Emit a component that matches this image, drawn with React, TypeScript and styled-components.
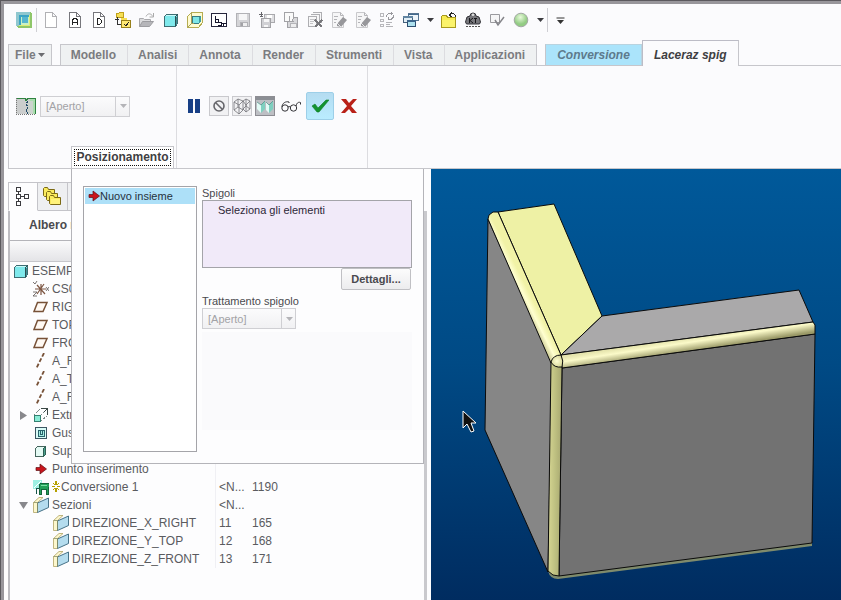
import React from "react";
import styled, { createGlobalStyle, css } from "styled-components";

const GlobalStyle = createGlobalStyle`
  * { box-sizing: border-box; }
  body { margin: 0; background: #fbfbfd; }
  body, button, select, textarea { font-family: "Liberation Sans", Arial, sans-serif; }
  button { margin: 0; padding: 0; border: 0; background: none; color: inherit; }
`;

const Frame = styled.div`
  min-height: 100vh;
  display: flex;
  border: solid #5b595e;
  border-width: 1px 0 0 1px;
  padding: 3px 0 0 3px;
  background: #98969b;
`;
const Page = styled.div`
  flex: 1;
  min-width: 0;
  display: flex;
  flex-direction: column;
  background: #fbfbfd;
  color: #4a4a4e;
`;

/* ---------- quick access bar ---------- */
const QuickBar = styled.div`
  display: flex;
  align-items: center;
  height: 32px;
  padding-left: 8px;
`;
const QuickButton = styled.button<{ $narrow?: boolean }>`
  width: ${(p) => (p.$narrow ? 14 : 24)}px;
  height: 24px;
  flex: none;
  display: grid;
  place-items: center;
`;
const QuickDivider = styled.span<{ $gap?: number }>`
  width: 1px;
  height: 24px;
  margin-right: ${(p) => p.$gap ?? 0}px;
  background: #cfcfd4;
`;

/* ---------- tabs ---------- */
const TabBar = styled.nav`
  display: flex;
  align-items: flex-end;
  gap: 8px;
  height: 29px;
  padding-left: 4px;
`;
const TabGroup = styled.div`
  display: flex;
  align-items: flex-end;
`;
const Tab = styled.button<{ $kind?: "file" | "context" | "active" }>`
  height: 21px;
  padding: 0 11px 0 10px;
  font-size: 12px;
  font-weight: bold;
  white-space: nowrap;
  color: #7b7c80;
  background: #eff1f2;
  border-top: 1px solid #c6c6cb;
  border-right: 1px solid #dcdce0;
  &:first-child { border-left: 1px solid #c6c6cb; }
  &:last-child { border-right-color: #c6c6cb; }
  ${(p) => p.$kind === "file" && css`
    display: flex;
    align-items: center;
    gap: 2px;
    padding: 0 6px;
  `}
  ${(p) => p.$kind === "context" && css`
    padding: 0 11px;
    background: #abe4fb;
    font-style: italic;
    color: #5d7a8c;
    border-color: #b9d3df;
  `}
  ${(p) => p.$kind === "active" && css`
    height: 26px;
    margin-bottom: -1px;
    padding: 3px 11px 0;
    background: #fbfbfd;
    font-style: italic;
    color: #3e3e42;
    border: 1px solid #bcbcc6;
    border-bottom: 0;
    position: relative;
  `}
`;

/* ---------- ribbon ---------- */
const Ribbon = styled.section`
  display: flex;
  margin-left: 4px;
  border: 1px solid #c6c6cb;
  border-right: 0;
`;
const Group = styled.div`
  display: flex;
  flex-direction: column;
  padding: 26px 8px 0 7px;
  border-right: 1px solid #dcdce0;
`;
const GroupRow = styled.div<{ $gap?: number }>`
  display: flex;
  align-items: center;
  height: 28px;
  gap: ${(p) => p.$gap ?? 3}px;
`;
const ToolButton = styled.button<{ $look?: "framed" | "pressed" | "accept" }>`
  width: 20px;
  height: 20px;
  display: grid;
  place-items: center;
  flex: none;
  ${(p) => p.$look === "framed" && css`
    border: 1px solid #c9c9cd;
    background: #f1f1f3;
  `}
  ${(p) => p.$look === "pressed" && css`
    border: 1px solid #8d8d93;
    background: #bdbfc4;
  `}
  ${(p) => p.$look === "accept" && css`
    width: 28px;
    height: 28px;
    border: 1px solid #9dcfe8;
    border-radius: 2px;
    background: linear-gradient(#b5dcf1, #b9ecff);
  `}
`;
const Pause = styled(ToolButton)`
  margin-right: 2px;
`;
const Glasses = styled(ToolButton)`
  width: 25px;
`;
const Cancel = styled(ToolButton)`
  margin-left: 2px;
`;
const PanelTab = styled.button`
  align-self: flex-end;
  width: 103px;
  height: 22px;
  margin: 26px -6px 0 55px;
  padding: 2px;
  border: 1px solid #c6c6cb;
  border-bottom: 0;
  background: #fff;
  font-size: 12px;
  font-weight: bold;
  color: #3f3f43;
`;
const FocusRing = styled.span`
  display: block;
  line-height: 15px;
  border: 1px dotted #111;
`;

/* ---------- drop-down ---------- */
const Combo = styled.div<{ $width: number }>`
  display: grid;
  width: ${(p) => p.$width}px;
  height: 21px;
  flex: none;
  & > * { grid-area: 1 / 1; }
`;
const ComboSelect = styled.select`
  appearance: none;
  width: 100%;
  height: 21px;
  padding: 0 5px;
  border: 1px solid #cfcfd3;
  border-radius: 0;
  background: linear-gradient(#fbfbfc, #f1f1f3);
  font-size: 11px;
  color: #a2a2a6;
  &:disabled { opacity: 1; color: #a2a2a6; }
`;
const ComboArrow = styled.span`
  justify-self: end;
  width: 15px;
  display: grid;
  place-items: center;
  border-left: 1px solid #cfcfd3;
  pointer-events: none;
`;

/* ---------- workspace ---------- */
const Workspace = styled.main`
  flex: 1;
  display: grid;
  grid-template-columns: 427px minmax(0, 1fr);
  position: relative;
`;
const Sidebar = styled.aside`
  display: flex;
  flex-direction: column;
  padding: 13px 4px 0 4px;
  background: #fdfdfe;
`;
const SideTabs = styled.div`
  display: flex;
  height: 29px;
`;
const SideTab = styled.button<{ $active?: boolean }>`
  width: 30px;
  display: grid;
  place-items: center;
  border: 1px solid #c4c4c9;
  border-left-width: ${(p) => (p.$active ? 1 : 0)}px;
  border-bottom-color: ${(p) => (p.$active ? "#fdfdfe" : "#c4c4c9")};
  background: ${(p) => (p.$active ? "#fdfdfe" : "#eeeff1")};
`;
const TreePanel = styled.div`
  flex: 1;
  border-left: 2px solid #bdbdc2;
  border-right: 3px solid #c9c9cd;
`;
const TreeTitle = styled.h2`
  margin: 0;
  padding-left: 19px;
  font-size: 12px;
  line-height: 29px;
`;
const TreeTable = styled.table`
  width: 100%;
  table-layout: fixed;
  border-collapse: separate;
  border-spacing: 0;
  font-size: 12px;
  color: #5a5b5f;
`;
const TreeHead = styled.th<{ $width?: number }>`
  width: ${(p) => (p.$width ? `${p.$width}px` : "auto")};
  height: 22px;
  padding: 0;
  border-top: 1px solid #b4b4b9;
  border-bottom: 1px solid #c6c6cb;
  background: linear-gradient(#fafafb, #e4e4e7);
`;
const TreeCell = styled.td<{ $divider?: boolean }>`
  height: 18px;
  padding: 0 0 0 ${(p) => (p.$divider ? 0 : 3)}px;
  white-space: nowrap;
  border-right: ${(p) => (p.$divider ? "1px solid #f0f0f4" : "0")};
`;
const TreeNode = styled.div<{ $depth: number; $toggle?: boolean }>`
  display: flex;
  align-items: center;
  height: 18px;
  gap: 3px;
  padding-left: ${(p) => (p.$toggle ? 6 : 3 + p.$depth * 20)}px;
`;
const Toggle = styled.button`
  width: 14px;
  height: 16px;
  display: grid;
  place-items: center;
`;

/* ---------- placement panel, floating above the tree ---------- */
const Placement = styled.form`
  position: absolute;
  top: 0;
  left: 67px;
  width: 353px;
  display: grid;
  grid-template-columns: 114px 1fr;
  gap: 5px;
  padding: 17px 11px 11px;
  border: solid #b4b4b9;
  border-width: 0 1px 1px;
  background: #fdfdfe;
  font-size: 11px;
`;
const SetList = styled.ul`
  margin: 0;
  padding: 1px;
  height: 266px;
  list-style: none;
  border: 1px solid #a4a4a9;
  background: #fff;
`;
const SetItem = styled.li`
  display: flex;
  align-items: center;
  height: 16px;
  padding-left: 3px;
  background: #ade0f8;
  color: #26313c;
`;
const Fields = styled.div`
  display: flex;
  flex-direction: column;
`;
const FieldLabel = styled.label`
  line-height: 14px;
`;
const Collector = styled.textarea`
  height: 68px;
  margin: 0;
  padding: 3px 15px;
  border: 1px solid #a4a4a9;
  border-radius: 0;
  outline: 0;
  resize: none;
  background: #f1eaf9;
  font-size: 11px;
  color: #2d2838;
`;
const DetailsButton = styled.button`
  align-self: flex-end;
  height: 22px;
  width: 70px;
  margin: 0 1px 4px 0;
  border: 1px solid #c0c0c4;
  border-radius: 2px;
  background: linear-gradient(#fcfcfc, #ececee);
  font-size: 11px;
  font-weight: bold;
`;
const Blank = styled.div`
  flex: 1;
  margin: 3px 0 22px;
  background: #fafafc;
`;

const Viewport = styled.div`
  background: linear-gradient(#00599a, #004a85 45%, #002c60);
  overflow: hidden;
`;
const Scene = styled.svg`
  display: block;
  width: 100%;
  height: 431px;
`;

/* ---------- icons ---------- */
type IconProps = { children: React.ReactNode; w?: number; h?: number; smooth?: boolean };
const Icon = ({ children, w = 16, h = 16, smooth }: IconProps) => (
  <svg width={w} height={h} viewBox={`0 0 ${w} ${h}`} fill="none" aria-hidden="true"
    shapeRendering={smooth ? "auto" : "crispEdges"}>{children}</svg>
);
const Down = ({ color = "#3c3c40" }: { color?: string }) => (
  <Icon w={7} h={4} smooth><path d="M0 0h7L3.5 4z" fill={color} /></Icon>
);
const Sheet = ({ mark, tone = "#77777c" }: { mark?: React.ReactNode; tone?: string }) => (
  <Icon><path d="M2.500.5h7l4 4v11h-11zM9.500.5v4h4" stroke={tone} fill="#fff" />{mark}</Icon>
);
const EditSheet = () => (
  <Icon smooth>
    <path d="M1.500.5h8l3 3v12h-11z" fill="#f6f6f7" stroke="#c9c9cc" />
    <path d="M9.500.5v3h3M3 4.500h4M3 7.500h3M3 10.500h2" stroke="#b4b4b8" />
    <path d="M6 12l6-7 4 3-6 7-4-1z" fill="#97979b" />
    <path d="M6 11l4 4" stroke="#e8e8ea" />
  </Icon>
);

const LogoIcon = () => (
  <Icon>
    <path d="M0 0h14l2 2v14H2l-2-2z" fill="#8fc66a" />
    <path d="M0 0h14v3H3v11H0z" fill="#8fc7cf" />
    <path d="M3 3h10v10H3z" fill="#3aa3c4" />
    <path d="M5 5h9v8H5z" fill="#c9f0c4" />
    <path d="M6 5h6v6H6z" fill="#55b5cf" />
    <path d="M3 13.500h10.500V3" stroke="#dcec74" />
  </Icon>
);
const StructureIcon = () => (
  <Icon>
    <path d="M1 1h3l1-1h3v5H1z" fill="#f6df54" stroke="#c0a01c" />
    <path d="M0 7h4M2 5v7h5M6 7h3" stroke="#333" />
    <path d="M6 6h6v3H6z" fill="#f6df54" />
    <rect x="6.500" y="8.500" width="9" height="7" fill="#ffe873" stroke="#97801c" />
    <path d="M9 12l2 2 3-4" stroke="#222" />
  </Icon>
);
const OpenIcon = () => (
  <Icon smooth>
    <path d="M.5 14.500V6.500h4l1 1h6v2" fill="#dcdcde" stroke="#a9a9ad" />
    <path d="M.5 14.500l3-5h11l-4 5z" fill="#b6b6ba" stroke="#9d9da1" />
    <path d="M7 4.500c2-4 5-3 7 0M14.500 1v4h-4" stroke="#aaa" />
  </Icon>
);
const Cube = () => (
  <Icon w={14} h={14}>
    <path d="M.5 3.500l2-2h11v9l-2 3H.5z" fill="#7fe9ec" stroke="#3d6d72" />
    <path d="M11.500 13V3.500l2-2" stroke="#2a5054" />
    <path d="M12 4l1-1v8l-1 1z" fill="#3e8d92" />
    <path d="M1 3h10l1-1H3z" fill="#c7fafa" />
  </Icon>
);
const NestedCubeIcon = () => (
  <Icon>
    <path d="M.5 4.500l4-4h11v10l-4 5H.5z" fill="#fffbd0" stroke="#b5ac52" />
    <path d="M5.500 4.500h8v5l-2 2h-6z" fill="#7fe6e6" stroke="#397b80" />
    <path d="M12 11V5l2-2v6z" fill="#3d9ba0" />
    <path d="M4.500.5v11l-4 4M4.500 11.500h2" stroke="#a8a05a" />
  </Icon>
);
const FormatIcon = () => (
  <Icon>
    <rect x=".5" y="1.500" width="15" height="13" fill="#fff" stroke="#26263c" />
    <path d="M4.500 4v6h6M4 7.500h3M7.500 7v3M7 13.500h3v-2h6M12.500 11v3" stroke="#15152c" />
  </Icon>
);
const SaveIcon = () => (
  <Icon>
    <path d="M1.500 1.500h13v13h-13z" fill="#d4d4d7" stroke="#b2b2b6" />
    <path d="M4 2h8v6H4z" fill="#f6f6f7" />
    <path d="M5 10h7v4H5z" fill="#efeff0" stroke="#b2b2b6" />
    <path d="M6 11h2v3H6z" fill="#a2a2a6" />
  </Icon>
);
const SaveAllIcon = () => (
  <Icon>
    <path d="M5.500 2.500h10v8h-10z" fill="#dfdfe2" stroke="#a9a9ad" />
    <path d="M8 3h5v3H8z" fill="#fff" />
    <path d="M2.500 6.500h9v9h-9z" fill="#d0d0d4" stroke="#a2a2a6" />
    <path d="M5 7h5v3H5zM5 13h4v2H5z" fill="#f6f6f7" />
    <path d="M0 2.500h4M2.500 0v5M1 4h3" stroke="#66666b" />
  </Icon>
);
const CopyIcon = () => (
  <Icon>
    <path d="M4.500 5.500h10v10h-10z" fill="#d8d8db" stroke="#a2a2a6" />
    <path d="M7 11h6v4H7z" fill="#ededee" stroke="#b4b4b8" />
    <path d="M1.500.5h9v6l-2 3h-7z" fill="#fafafa" stroke="#a2a2a6" />
    <path d="M6.500 4v5h4" stroke="#a2a2a6" />
  </Icon>
);
const DiscardIcon = () => (
  <Icon>
    <path d="M5.500.5h9v10M3.500 2.500h9v10M1.500 4.500h8v10h-8z" stroke="#aeaeb2" fill="#f7f7f8" />
    <path d="M3 7.500h5M3 9.500h4M3 11.500h3" stroke="#c4c4c7" />
    <path d="M8 8l7 7M15 8l-7 7" stroke="#77777b" strokeWidth="1.500" />
  </Icon>
);
const RegenIcon = () => (
  <Icon>
    <path d="M1.500 1.500h3v3h-3zM1.500 7.500h3v2h-3zM1.500 12.500h3v2h-3z" stroke="#b8b8bc" />
    <path d="M7 10.500h6M7 12.500h4M7 14.500h7" stroke="#b4b4b8" />
    <path d="M7.500 5V3.500l2-2h4M14.500 3v2l-2 2h-4M12.500 0v3M9.500 5v3" stroke="#98989d" />
  </Icon>
);
const WindowsIcon = () => (
  <Icon>
    <path d="M5.500 1.500h10v7h-10z" fill="#eef5fa" stroke="#567390" />
    <path d="M5 2h11v1H5z" fill="#43698c" />
    <path d="M.5 4.500h9v6h-9z" fill="#e1eef5" stroke="#44607c" />
    <path d="M0 4h10v2H0z" fill="#6185a2" />
    <path d="M4.500 8.500h8v6h-8z" fill="#aee1ee" stroke="#2d4e70" />
    <path d="M4 8h9v2H4z" fill="#3c658c" />
  </Icon>
);
const FolderBackIcon = () => (
  <Icon>
    <path d="M.5 15.500v-11l1-1h4l1 2h8v10z" fill="#f8ec52" stroke="#a99a1d" />
    <path d="M1 8h13v7H1z" fill="#fbf36c" />
    <path d="M14.500 5c0-4-4-4-6-2M11 0L8 3l3 2" stroke="#252525" />
  </Icon>
);
const WeightIcon = () => (
  <Icon smooth>
    <path d="M5 4a3 3 0 016 0l3 1 1.500 5-1 2h-13l-1-2L2 5z" fill="#77777c" stroke="#333338" />
    <circle cx="8" cy="2.800" r="1.300" fill="#ddd" />
    <path d="M4.500 6v5M8 6L5 8.500 8 11M10.500 6v5M9 6.500h3" stroke="#17171b" />
    <path d="M1 14.500h14" stroke="#555" strokeDasharray="2 1" />
  </Icon>
);
const CheckBoxIcon = () => (
  <Icon smooth>
    <path d="M1.500 2.500h9v8h-9z" fill="#f6f6f7" stroke="#9a9a9e" />
    <path d="M6 8l3 5 6-8" stroke="#85858a" strokeWidth="1.500" />
  </Icon>
);
const SphereIcon = () => (
  <Icon smooth>
    <defs>
      <radialGradient id="sphere" cx=".45" cy=".3"><stop stopColor="#e8fadb" /><stop offset="1" stopColor="#93cc84" /></radialGradient>
    </defs>
    <circle cx="8" cy="8" r="6.800" fill="url(#sphere)" stroke="#a3a8a4" />
  </Icon>
);
const MoreIcon = () => (
  <Icon w={9} h={7} smooth><path d="M.5 1h8" stroke="#333" /><path d="M1 3h7L4.500 7z" fill="#333" /></Icon>
);
const RipIcon = () => (
  <Icon w={20} h={18}>
    <path d="M0 1h20v16H0z" fill="#cbcdcd" />
    <path d="M14 2h6v15h-6z" fill="#a9dcae" />
    <path d="M12 4h5v13h-5z" fill="#cbd3cd" />
    <path d="M0 1.500h9l1 2 2-2h7.500v15.500" stroke="#2f8440" />
    <path d="M0 17.500h20M.5 1v16" stroke="#777" strokeDasharray="1 1" />
    <path d="M11.500 4l-1 3 1 3-1 3 1 4" stroke="#234b68" strokeDasharray="2 1" />
  </Icon>
);
const PauseIcon = () => (
  <Icon w={12} h={14}><path d="M0 0h5v14H0zM7 0h5v14H7z" fill="#173f86" /></Icon>
);
const ForbidIcon = () => (
  <Icon smooth w={14} h={14}><circle cx="7" cy="7" r="5" stroke="#66666b" strokeWidth="1.600" /><path d="M3.500 3.500l7 7" stroke="#66666b" strokeWidth="1.600" /></Icon>
);
const WireIcon = () => (
  <Icon smooth w={18} h={18}>
    <path d="M1 5l4-3 5 2-4 4zM1 5v8l5 4V8M6 17l4-4V4M5 2v8l-4 3M5 10l5 3M10 4l3-2 4 2-4 4zM13 8v7l4-3V4M10 12l3 3M13 2v7l-3 3M13 9l4 3" stroke="#737378" strokeWidth=".8" />
  </Icon>
);
const SolidIcon = () => (
  <Icon smooth w={18} h={18}>
    <path d="M0 0h18v3H0z" fill="#8b8e94" />
    <path d="M1 5l4 3v8l-4-4zM10 5l3 3v8l-3-3z" fill="#e3fbf6" />
    <path d="M5 8l4-4v8l-4 4zM13 8l4-4v8l-4 4z" fill="#7fd0c0" />
    <path d="M1 5l4 3 4-4M10 5l3 3 4-4" stroke="#4f8f86" strokeWidth=".7" />
  </Icon>
);
const GlassesIcon = () => (
  <Icon smooth w={20} h={12}>
    <circle cx="4" cy="8" r="3.200" stroke="#343438" /><circle cx="12.500" cy="8" r="3.200" stroke="#343438" />
    <path d="M7 7q1-1 2.500 0M1 7c0-4 4-6 7-5v1M15 6c1-4 3-4 4.500-3.500v2" stroke="#343438" />
  </Icon>
);
const AcceptIcon = () => (
  <Icon smooth w={18} h={14}><path d="M1 7l3-2 3 4 8-8h3L8 13H6z" fill="#13932f" stroke="#0f7d27" strokeWidth=".6" /></Icon>
);
const CancelIcon = () => (
  <Icon smooth><path d="M0 1h5l3 4 4-4h4l-6 7 6 7h-5l-3-4-4 4H0l6-7z" fill="#b92118" /></Icon>
);

const TreeTabIcon = () => (
  <Icon w={14} h={20}>
    <path d="M.5.500h4v4h-4zM.5 7.500h4v4h-4zM.5 14.500h4v4h-4zM8.500 7.500h4v4h-4z" stroke="#3b3b3f" />
    <path d="M2.500 5v2M2.500 12v2M5 9.500h3" stroke="#3b3b3f" />
  </Icon>
);
const FoldersIcon = () => (
  <Icon w={19} h={20} smooth>
    {[0, 3, 6].map((o, i) => (
      <path key={o} transform={`translate(${o} ${i * 4})`} d="M.5 8.500v-7l1-1h3l1 2h6v7h-10z" fill="#f9ea5c" stroke="#7b6914" />
    ))}
    <path d="M8 12h9v5H8z" fill="#fff27a" />
  </Icon>
);
const CsysIcon = () => (
  <Icon smooth>
    <path d="M2 8h11M4 4l8 9M11 3L4 13M8 3v11" stroke="#7d5642" strokeWidth="1.200" />
    <path d="M0 1l2 2 2-3M0 11h4l-4 4h4M13 6l3 4M16 6l-3 4" stroke="#5c5350" strokeWidth=".8" />
  </Icon>
);
const PlaneIcon = () => (
  <Icon smooth><path d="M4.500 3.500h9.500l-4 9H1z" stroke="#775137" strokeWidth="1.500" fill="#fff9f3" /></Icon>
);
const AxisIcon = () => (
  <Icon smooth><path d="M11 0L3 16" stroke="#775137" strokeWidth="1.800" strokeDasharray="4 2" /></Icon>
);
const ExtrudeIcon = () => (
  <Icon>
    <path d="M1.500 8.500h6v6h-6z" fill="#8aecd6" stroke="#348071" />
    <path d="M1 8l6-6M8 14l6-5M8 8l5-5" stroke="#7d8a88" strokeDasharray="2 1" />
    <path d="M8 1.500h6.500V8M14 2l-3 3" stroke="#3a4745" />
  </Icon>
);
const ShellIcon = () => (
  <Icon>
    <path d="M2.500 2.500h11v11h-11z" stroke="#3c5662" fill="#d9fbf7" /><path d="M5.500 5.500h6v6h-6z" fill="#a5eee2" stroke="#29616b" />
    <path d="M7.500 6v3h2V6" stroke="#29616b" />
  </Icon>
);
const SurfaceIcon = () => (
  <Icon>
    <path d="M2.500 5.500l2-2h8v8l-2 2h-8z" fill="#e4faf4" stroke="#46665e" />
    <path d="M10.500 13V5.500l2-2v8z" fill="#4ba08d" stroke="#2e6155" />
  </Icon>
);
const ArrowIcon = () => (
  <svg width="12" height="12" viewBox="2 2 12 12" aria-hidden="true"><path d="M3 6.500h4V3l6.500 5L7 13V9.500H3z" fill="#c9151c" stroke="#5e1014" strokeWidth=".7" /></svg>
);
const ConvertIcon = () => (
  <Icon>
    <path d="M0 1h9v9H0z" fill="#9defe2" /><path d="M1 9l7-7" stroke="#fff" />
    <path d="M6 6l2-2h8v4h-1v7h-2v-5H8v5H6z" fill="#23a158" stroke="#14653a" />
    <path d="M8 6h6" stroke="#7be0a5" />
    <path d="M3.500 15V9.500h3" stroke="#175448" />
  </Icon>
);
const SparkIcon = () => (
  <Icon w={8} h={16}><path d="M4 2v4M4 9v4M0 7.500h3M5 7.500h3M1 4l2 2M7 4L5 6M1 11l2-2M7 11L5 9" stroke="#b5a000" strokeWidth="1.200" /></Icon>
);
const SectionIcon = () => (
  <Icon smooth>
    <path d="M.5 5.500L6 .5h4L4.500 5.500v10H.5z" fill="#fcf7cd" stroke="#b1a566" strokeWidth=".8" />
    <path d="M4.500 6L15.500 1v9.500L4.500 15.500z" fill="#b4dcee" stroke="#477287" />
    <path d="M.5 5.500h4V15" stroke="#8a8f62" strokeWidth=".8" />
  </Icon>
);

const quickActions: [string, React.ReactNode][] = [
  ["Nuovo", <Sheet tone="#b0b0b4" />],
  ["Nuovo assieme", <Sheet mark={<path d="M5.500 13V8l2-2h1l2 2v5M5 10.500h5" stroke="#222" />} />],
  ["Nuovo disegno", <Sheet mark={<path d="M6.500 6.500h2l2 2v2l-2 2h-2z" stroke="#222" />} />],
  ["Struttura", <StructureIcon />],
  ["Apri", <OpenIcon />],
  ["Modello 3D", <Cube />],
  ["Viste modello", <NestedCubeIcon />],
  ["Formato", <FormatIcon />],
  ["Salva", <SaveIcon />],
  ["Salva copia", <SaveAllIcon />],
  ["Copia", <CopyIcon />],
  ["Elimina", <DiscardIcon />],
  ["Modifica", <EditSheet />],
  ["Modifica definizione", <EditSheet />],
  ["Rigenera", <RegenIcon />],
  ["Finestre", <WindowsIcon />],
];
const modelActions: [string, React.ReactNode][] = [
  ["Directory di lavoro", <FolderBackIcon />],
  ["Massa", <WeightIcon />],
  ["Verifica", <CheckBoxIcon />],
  ["Aspetto", <SphereIcon />],
];
const mainTabs = ["Modello", "Analisi", "Annota", "Render", "Strumenti", "Vista", "Applicazioni"];

type Row = { name: string; icon: React.ReactNode; depth: number; toggle?: "open" | "closed"; spark?: boolean; id?: string; feat?: string };
const rows: Row[] = [
  { name: "ESEMPIO", icon: <Cube />, depth: 0 },
  { name: "CS0", icon: <CsysIcon />, depth: 1 },
  { name: "RIGHT", icon: <PlaneIcon />, depth: 1 },
  { name: "TOP", icon: <PlaneIcon />, depth: 1 },
  { name: "FRONT", icon: <PlaneIcon />, depth: 1 },
  { name: "A_RIGHT", icon: <AxisIcon />, depth: 1 },
  { name: "A_TOP", icon: <AxisIcon />, depth: 1 },
  { name: "A_FRONT", icon: <AxisIcon />, depth: 1 },
  { name: "Extrude 1", icon: <ExtrudeIcon />, depth: 1, toggle: "closed" },
  { name: "Guscio 1", icon: <ShellIcon />, depth: 1 },
  { name: "Superficie", icon: <SurfaceIcon />, depth: 1 },
  { name: "Punto inserimento", icon: <ArrowIcon />, depth: 1 },
  { name: "Conversione 1", icon: <ConvertIcon />, depth: 1, spark: true, id: "<N...", feat: "1190" },
  { name: "Sezioni", icon: <SectionIcon />, depth: 1, toggle: "open", id: "<N..." },
  { name: "DIREZIONE_X_RIGHT", icon: <SectionIcon />, depth: 2, id: "11", feat: "165" },
  { name: "DIREZIONE_Y_TOP", icon: <SectionIcon />, depth: 2, id: "12", feat: "168" },
  { name: "DIREZIONE_Z_FRONT", icon: <SectionIcon />, depth: 2, id: "13", feat: "171" },
];
const Slot = styled.span`
  width: 16px;
  height: 16px;
  display: grid;
  place-items: center;
  flex: none;
`;
const NodeName = styled.span<{ $tight?: boolean }>`
  margin-left: ${(p) => (p.$tight ? -2 : 0)}px;
`;

const OpenSelect = ({ id, width, label }: { id: string; width: number; label?: string }) => (
  <Combo $width={width}>
    <ComboSelect id={id} disabled aria-label={label}><option>[Aperto]</option></ComboSelect>
    <ComboArrow><Down color="#b4b4b8" /></ComboArrow>
  </Combo>
);

const Model = () => (
  <Scene viewBox="0 0 410 431" preserveAspectRatio="xMinYMin meet" role="img" aria-label="Modello 3D">
    <defs>
      <linearGradient id="rollLeft" gradientUnits="userSpaceOnUse" x1="82" y1="121" x2="94" y2="115">
        <stop stopColor="#bdbb83" /><stop offset=".55" stopColor="#ffffd0" /><stop offset="1" stopColor="#f1f2a6" />
      </linearGradient>
      <linearGradient id="rollTop" gradientUnits="userSpaceOnUse" x1="250" y1="170" x2="252" y2="183">
        <stop stopColor="#e6e5ae" /><stop offset=".35" stopColor="#fbfac9" /><stop offset="1" stopColor="#9b9a68" />
      </linearGradient>
      <linearGradient id="rollFront" gradientUnits="userSpaceOnUse" x1="118" y1="0" x2="131" y2="0">
        <stop stopColor="#d3d390" /><stop offset=".5" stopColor="#bdbf80" /><stop offset="1" stopColor="#a7a770" />
      </linearGradient>
      <radialGradient id="corner"><stop stopColor="#ffffd4" /><stop offset="1" stopColor="#d8d79a" /></radialGradient>
    </defs>
    <path d="M117 402q2 8 10 8l254-33v-5z" fill="#7f8b6c" />
    <g stroke="#0b0b0b" strokeWidth="1" strokeLinejoin="round">
      <path d="M57 50L54 261l63 142 4-210z" fill="#868686" />
      <path d="M67 43l56-8 48 112-41 39z" fill="#eef1a5" />
      <path d="M171 147l197-26 14 32-252 33z" fill="#aaa9aa" />
      <path d="M131 199l253-34-3 209-253 33z" fill="#727272" />
      <path d="M57 50l1-4 4-3h5l63 143-10 8z" fill="url(#rollLeft)" />
      <path d="M130 186l252-33 2 3v9l-253 34z" fill="url(#rollTop)" />
      <path d="M120 193l11 5-3 209-6-1-5-4z" fill="url(#rollFront)" />
      <path d="M120 193q2-7 10-7 3 6 1 12-8 1-11-5z" fill="url(#corner)" />
    </g>
    <path d="M32 242v17l4-4 4 8 3-1-3-8h5z" fill="#111" stroke="#fff" />
  </Scene>
);

export default function App() {
  return (
    <>
      <GlobalStyle />
      <Frame>
        <Page>
          <QuickBar role="toolbar" aria-label="Accesso rapido">
            <QuickButton aria-label="Applicazione"><LogoIcon /></QuickButton>
            <QuickDivider $gap={2} />
            {quickActions.map(([name, icon]) => <QuickButton key={name} aria-label={name}>{icon}</QuickButton>)}
            <QuickButton $narrow aria-label="Elenco finestre"><Down /></QuickButton>
            {modelActions.map(([name, icon]) => <QuickButton key={name} aria-label={name}>{icon}</QuickButton>)}
            <QuickButton $narrow aria-label="Elenco aspetti"><Down /></QuickButton>
            <QuickDivider />
            <QuickButton aria-label="Personalizza"><MoreIcon /></QuickButton>
          </QuickBar>

          <TabBar>
            <TabGroup><Tab $kind="file">File<Down color="#6b6c70" /></Tab></TabGroup>
            <TabGroup>{mainTabs.map((t) => <Tab key={t}>{t}</Tab>)}</TabGroup>
            <TabGroup>
              <Tab $kind="context">Conversione</Tab>
              <Tab $kind="active">Laceraz spig</Tab>
            </TabGroup>
          </TabBar>

          <Ribbon>
            <Group>
              <GroupRow $gap={4}>
                <RipIcon />
                <OpenSelect id="rip-type" width={90} label="Tipo" />
              </GroupRow>
              <PanelTab><FocusRing>Posizionamento</FocusRing></PanelTab>
            </Group>
            <Group>
              <GroupRow>
                <Pause aria-label="Pausa"><PauseIcon /></Pause>
                <ToolButton $look="framed" aria-label="Nessuna anteprima"><ForbidIcon /></ToolButton>
                <ToolButton $look="framed" aria-label="Anteprima reticolare"><WireIcon /></ToolButton>
                <ToolButton $look="pressed" aria-label="Anteprima collegata"><SolidIcon /></ToolButton>
                <Glasses aria-label="Anteprima"><GlassesIcon /></Glasses>
                <ToolButton $look="accept" aria-label="Conferma"><AcceptIcon /></ToolButton>
                <Cancel aria-label="Annulla"><CancelIcon /></Cancel>
              </GroupRow>
            </Group>
          </Ribbon>

          <Workspace>
            <Sidebar>
              <SideTabs>
                <SideTab $active aria-label="Albero modello"><TreeTabIcon /></SideTab>
                <SideTab aria-label="Cartelle"><FoldersIcon /></SideTab>
                <SideTab aria-label="Preferiti" />
              </SideTabs>
              <TreePanel>
                <TreeTitle>Albero modello</TreeTitle>
                <TreeTable>
                  <thead>
                    <tr><TreeHead $width={206} /><TreeHead $width={33} /><TreeHead /></tr>
                  </thead>
                  <tbody>
                    {rows.map((r) => (
                      <tr key={r.name}>
                        <TreeCell $divider>
                          <TreeNode $depth={r.depth} $toggle={!!r.toggle}>
                            {r.toggle && (
                              <Toggle aria-label={r.name} aria-expanded={r.toggle === "open"}>
                                <Icon w={9} h={9} smooth>
                                  <path d={r.toggle === "open" ? "M0 1h9L4.500 8z" : "M1 0l7 4.500L1 9z"} fill="#88888c" />
                                </Icon>
                              </Toggle>
                            )}
                            <Slot>{r.icon}</Slot>
                            {r.spark && <SparkIcon />}
                            <NodeName $tight={r.spark}>{r.name}</NodeName>
                          </TreeNode>
                        </TreeCell>
                        <TreeCell>{r.id}</TreeCell>
                        <TreeCell>{r.feat}</TreeCell>
                      </tr>
                    ))}
                  </tbody>
                </TreeTable>
              </TreePanel>
            </Sidebar>

            <Viewport><Model /></Viewport>

            <Placement>
              <SetList role="listbox" aria-label="Insiemi">
                <SetItem role="option" aria-selected="true"><ArrowIcon />Nuovo insieme</SetItem>
              </SetList>
              <Fields>
                <FieldLabel htmlFor="edges">Spigoli</FieldLabel>
                <Collector id="edges" readOnly value="Seleziona gli elementi" />
                <DetailsButton type="button">Dettagli...</DetailsButton>
                <FieldLabel htmlFor="treatment">Trattamento spigolo</FieldLabel>
                <OpenSelect id="treatment" width={94} />
                <Blank />
              </Fields>
            </Placement>
          </Workspace>
        </Page>
      </Frame>
    </>
  );
}
